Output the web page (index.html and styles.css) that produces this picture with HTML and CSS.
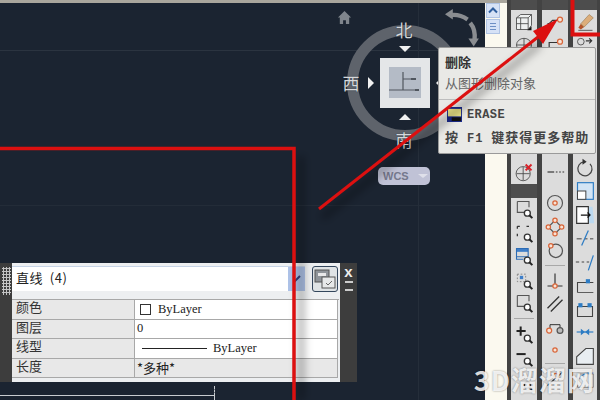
FILE: index.html
```html
<!DOCTYPE html>
<html lang="en">
<head>
    <meta charset="UTF-8">
    <title>ERASE</title>
    <link rel="stylesheet" href="styles.css">
</head>
<body>

    <!-- Shared toolbar icons -->
    <svg class="defs" width="0" height="0">
        <symbol id="zoom-lens" viewBox="0 0 24 24">
            <circle cx="16" cy="17" r="3.6" fill="#fff" stroke="#333" stroke-width="1.6"/>
            <path d="M18.5 19.5l3.5 3.5" stroke="#222" stroke-width="2.4"/>
        </symbol>
        <symbol id="zoom-box" viewBox="0 0 24 24">
            <path d="M4 3h14v7M4 3v13h8" fill="none" stroke="#555" stroke-width="1.3"/>
            <use href="#zoom-lens"/>
        </symbol>
    </svg>

    <div class="screen">
        <!-- Drawing area -->
        <div class="drawing">
            <div class="grid-h"></div>
            <div class="grid-h grid-h2"></div>
            <div class="grid-v"></div>

            <!-- ViewCube -->
            <div class="compass">
                <svg class="home" viewBox="0 0 16 16"><path d="M8 1L1 8h2v7h3.5v-4h3v4H13V8h2z" fill="#7f858c"/></svg>
                <svg class="rotate" viewBox="0 0 40 46">
                    <path d="M8 7c8-1 13 1 19 5" fill="none" stroke="#8a8d91" stroke-width="5"/>
                    <path d="M1 6l9-6v12z" fill="#8a8d91"/>
                    <path d="M30 16c5 6 6 12 5 20" fill="none" stroke="#8a8d91" stroke-width="5"/>
                    <path d="M28 34l12 0-6 9z" fill="#8a8d91"/>
                </svg>
                <div class="ring"></div>
                <span class="dir dir-n">北</span>
                <span class="dir dir-w">西</span>
                <span class="dir dir-s">南</span>
                <i class="tri tri-n"></i>
                <i class="tri tri-s"></i>
                <i class="tri tri-w"></i>
                <i class="tri tri-e"></i>
                <div class="cube">
                    <div class="cube-face">
                        <svg viewBox="0 0 31 31"><path d="M0 23h30M14 5v18M14 12h9" fill="none" stroke="#50565e" stroke-width="1.2"/><path d="M22 11h5v2h-5zM26 22h4v2h-4z" fill="#50565e"/></svg>
                    </div>
                </div>
                <div class="wcs">WCS <i></i></div>
            </div>

            <!-- Quick properties palette -->
            <div class="palette">
                <div class="palette-grip"></div>
                <div class="palette-body">
                    <div class="palette-top">
                        <div class="select">
                            <span class="select-text">直线 (4)</span>
                            <div class="select-btn"><svg viewBox="0 0 10 10"><path d="M2 8l6-6" stroke="#34407a" stroke-width="2"/></svg></div>
                        </div>
                        <div class="toggle">
                            <svg viewBox="0 0 24 24">
                                <rect x="2" y="3" width="14" height="12" fill="#8f9499" stroke="#555"/>
                                <rect x="5" y="6" width="8" height="3" fill="#e8e8e8"/>
                                <rect x="9" y="10" width="13" height="11" fill="#e6e8e8" stroke="#555"/>
                                <path d="M13 16l2 2 4-4" fill="none" stroke="#666"/>
                            </svg>
                        </div>
                    </div>
                    <div class="prop-table">
                        <div class="prop-label">颜色</div>
                        <div class="prop-value"><i class="swatch"></i>ByLayer</div>
                        <div class="prop-label">图层</div>
                        <div class="prop-value">0</div>
                        <div class="prop-label">线型</div>
                        <div class="prop-value"><i class="line-sample"></i>ByLayer</div>
                        <div class="prop-label">长度</div>
                        <div class="prop-value prop-off">*多种*</div>
                    </div>
                </div>
                <div class="palette-side">
                    <span class="close">x</span>
                    <span class="menu"></span>
                </div>
            </div>

            <div class="bottom-line"></div>
        </div>

        <!-- Side scrollbar -->
        <div class="scrollbar">
            <div class="scroll-btn"><svg viewBox="0 0 12 12"><path d="M2 8l4-4 4 4" fill="none" stroke="#2f5f9f" stroke-width="2"/></svg></div>
            <div class="scroll-btn"><svg viewBox="0 0 12 12"><path d="M3 3h6M3 6h6M3 9h6" stroke="#6d8fc4"/></svg></div>
        </div>

        <!-- Toolbars -->
        <div class="toolbars">
            <div class="toolbar tb-view">
                <div class="tb-head"></div>
                <div class="tool"><svg viewBox="0 0 24 24"><path d="M3 7l5-4h13v13l-4 5H3zM3 7h14v14M17 7l4-4M8 7v14M3 14h14" fill="#eef0f0" stroke="#444"/><path d="M16 22l5-5v5z" fill="#111"/></svg></div>
                <div class="tool"><svg viewBox="0 0 24 24"><ellipse cx="12" cy="12" rx="9" ry="8" fill="none" stroke="#444"/><path d="M3 12h18M12 4v16" stroke="#444"/></svg></div>
                <div class="tb-space-a"></div>
                <div class="tool"><svg viewBox="0 0 24 24"><circle cx="11" cy="14" r="8.5" fill="none" stroke="#444"/><path d="M3 14h16M11 6v16" stroke="#444"/><path d="M14 3l7 7M21 3l-7 7" stroke="#d8232a" stroke-width="2.4"/></svg></div>
                <div class="tb-split"></div>
                <div class="tool"><svg viewBox="0 0 24 24"><use href="#zoom-box"/></svg></div>
                <div class="tool"><svg viewBox="0 0 24 24"><path d="M4 4h3M4 4v3M15 4h3M4 13v3" stroke="#333" stroke-width="1.5" fill="none"/><use href="#zoom-lens"/></svg></div>
                <div class="tool"><svg viewBox="0 0 24 24"><path d="M3 3h14v4H3z" fill="#3f7fc9"/><path d="M3 3h14v10H3zM3 3v13h8" fill="none" stroke="#2d6cb5" stroke-width="1.3"/><use href="#zoom-lens"/></svg></div>
                <div class="tool"><svg viewBox="0 0 24 24"><path d="M4 5h10v9H4z" fill="none" stroke="#777" stroke-dasharray="2 2"/><rect x="7" y="7" width="4" height="4" fill="#3f7fc9"/><use href="#zoom-lens"/></svg></div>
                <div class="tool"><svg viewBox="0 0 24 24"><use href="#zoom-box"/></svg></div>
                <div class="tb-rule"></div>
                <div class="tool"><svg viewBox="0 0 24 24"><path d="M8 3v11M3 8.500h11" stroke="#222" stroke-width="2.4"/><use href="#zoom-lens"/></svg></div>
                <div class="tool"><svg viewBox="0 0 24 24"><path d="M3 8.500h11" stroke="#222" stroke-width="2.4"/><use href="#zoom-lens"/></svg></div>
                <div class="tool"><svg viewBox="0 0 24 24"><use href="#zoom-lens"/></svg></div>
            </div>

            <div class="toolbar tb-snap">
                <div class="tb-head"></div>
                <div class="tool"><svg viewBox="0 0 24 24"><path d="M3 14h2l4-4h8" fill="none" stroke="#333" stroke-width="1.4"/><circle cx="18" cy="9" r="3" fill="#f6e3d6" stroke="#d9663a" stroke-width="1.5"/></svg></div>
                <div class="tool"><svg viewBox="0 0 24 24"><path d="M5 18V9h10" fill="none" stroke="#333" stroke-width="1.4"/><circle cx="18" cy="8" r="3" fill="#f6e3d6" stroke="#d9663a" stroke-width="1.5"/></svg></div>
                <div class="tb-space-b"></div>
                <div class="tool"><svg viewBox="0 0 24 24"><path d="M3 12h8" stroke="#333" stroke-width="1.4"/><path d="M13 12h2M17 12h2M21 12h2" stroke="#333" stroke-width="1.2"/></svg></div>
                <div class="tool tool-drop"><svg viewBox="0 0 24 24"><circle cx="12" cy="12" r="9" fill="none" stroke="#555" stroke-width="1.4"/><circle cx="12" cy="12" r="2.6" fill="#f6e3d6" stroke="#d9663a" stroke-width="1.5"/></svg></div>
                <div class="tool"><svg viewBox="0 0 24 24"><path d="M12 4l8 8-8 8-8-8z" fill="none" stroke="#555" stroke-width="1.4"/><circle cx="12" cy="4" r="2.6" fill="#f6e3d6" stroke="#d9663a" stroke-width="1.5"/><circle cx="20" cy="12" r="2.6" fill="#f6e3d6" stroke="#d9663a" stroke-width="1.5"/><circle cx="12" cy="20" r="2.6" fill="#f6e3d6" stroke="#d9663a" stroke-width="1.5"/><circle cx="4" cy="12" r="2.6" fill="#f6e3d6" stroke="#d9663a" stroke-width="1.5"/></svg></div>
                <div class="tool"><svg viewBox="0 0 24 24"><circle cx="13" cy="13" r="8" fill="none" stroke="#555" stroke-width="1.5"/><circle cx="7" cy="7" r="2.6" fill="#f6e3d6" stroke="#d9663a" stroke-width="1.5"/></svg></div>
                <div class="tb-rule"></div>
                <div class="tool"><svg viewBox="0 0 24 24"><path d="M12 3v15M3 18h18" stroke="#333" stroke-width="1.4"/><circle cx="12" cy="18" r="2.6" fill="#f6e3d6" stroke="#d9663a" stroke-width="1.5"/></svg></div>
                <div class="tool"><svg viewBox="0 0 24 24"><path d="M3 17L17 3M7 21L21 7" stroke="#333" stroke-width="1.6"/></svg></div>
                <div class="tool"><svg viewBox="0 0 24 24"><path d="M6 13V8h12v5" fill="none" stroke="#333" stroke-width="1.2"/><circle cx="5" cy="15" r="3" fill="#f6e3d6" stroke="#d9663a" stroke-width="1.5"/><circle cx="18" cy="15" r="3.500" fill="#bbb" stroke="#555" stroke-width="1.5"/></svg></div>
                <div class="tool tool-short"><svg viewBox="0 0 24 24"><circle cx="12" cy="12" r="2.6" fill="#f6e3d6" stroke="#d9663a" stroke-width="1.5"/></svg></div>
                <div class="tb-rule"></div>
                <div class="tool"><svg viewBox="0 0 24 24"><path d="M3 21L21 5" stroke="#333" stroke-width="1.4"/><circle cx="13" cy="9" r="2.600" fill="none" stroke="#d9663a" stroke-width="1.5"/></svg></div>
            </div>

            <div class="toolbar tb-modify">
                <div class="tb-head"></div>
                <div class="tool"><svg viewBox="0 0 24 24"><path d="M4 22h17" stroke="#444"/><path d="M4 19l3-5 4 4-4 3z" fill="#b5552a"/><path d="M7 14L17 3l5 4-11 11z" fill="#dcae7b" stroke="#8a6a3f" stroke-width=".6"/></svg></div>
                <div class="tool"><svg viewBox="0 0 24 24"><circle cx="7" cy="8" r="4" fill="none" stroke="#444"/><path d="M13 7h7M17 4l3 3-3 3" fill="none" stroke="#333" stroke-width="1.4"/></svg></div>
                <div class="tb-space-c"></div>
                <div class="tool"><svg viewBox="0 0 24 24"><path d="M18 7a8.500 8.500 0 1 1-7-2.500" fill="none" stroke="#444" stroke-width="1.5"/><path d="M9 1l5 3.500-5 3.500z" fill="#333"/></svg></div>
                <div class="tool"><svg viewBox="0 0 24 24"><rect x="3" y="2" width="19" height="20" fill="#d2e4f5" stroke="#2d7cc4" stroke-width="1.4"/><rect x="3" y="12" width="10" height="10" fill="#fff" stroke="#444" stroke-width="1.2"/></svg></div>
                <div class="tool"><svg viewBox="0 0 24 24"><path d="M16 2h5l2 20h-7z" fill="#bcd9f0"/><path d="M2 2h14v20H2z" fill="#fff" stroke="#333" stroke-width="1.4"/><path d="M7 12h11M15 9l3 3-3 3" fill="none" stroke="#111" stroke-width="1.5"/></svg></div>
                <div class="tool"><svg viewBox="0 0 24 24"><path d="M2 13h6M12 13h3M18 13h4" stroke="#444" stroke-width="1.2"/><path d="M8 21l8-18" stroke="#2d7cc4" stroke-width="1.5"/></svg></div>
                <div class="tool"><svg viewBox="0 0 24 24"><path d="M1 12h4M8 12h3M14 12h3" stroke="#444" stroke-width="1.2"/><path d="M16 22l6-18" stroke="#2d7cc4" stroke-width="1.5"/></svg></div>
                <div class="tool"><svg viewBox="0 0 24 24"><path d="M3 21V9h19" fill="none" stroke="#444" stroke-width="1.300"/><path d="M3 21h19" stroke="#444"/><rect x="13" y="5" width="5" height="5" fill="#2d7cc4"/></svg></div>
                <div class="tool"><svg viewBox="0 0 24 24"><path d="M3 21V9h18v12z" fill="none" stroke="#444" stroke-width="1.300"/><rect x="4" y="5" width="5" height="5" fill="#2d7cc4"/><rect x="15" y="5" width="5" height="5" fill="#2d7cc4"/></svg></div>
                <div class="tool"><svg viewBox="0 0 24 24"><path d="M2 12h20" stroke="#2d7cc4" stroke-width="1.4"/><path d="M7 8l5 4-5 4zM17 8l-5 4 5 4z" fill="#2d7cc4"/></svg></div>
                <div class="tool"><svg viewBox="0 0 24 24"><path d="M2 22V13L13 3h9v19z" fill="#e9eef2" stroke="#444" stroke-width="1.300"/></svg></div>
                <div class="tool"><svg viewBox="0 0 24 24"><path d="M3 22V6h19v16z" fill="#e9eef2" stroke="#777"/><path d="M3 14C6 7 14 4 22 5" fill="none" stroke="#2d7cc4" stroke-width="1.400"/></svg></div>
            </div>
        </div>
    </div>

    <!-- Tooltip over the canvas and toolbars -->
    <div class="tooltip">
        <div class="tip-main">
            <h4>删除</h4>
            <p>从图形删除对象</p>
        </div>
        <div class="tip-help">
            <div class="tip-cmd">
                <svg viewBox="0 0 16 16">
                    <rect x="0" y="0" width="16" height="16" fill="#1b2b8f"/>
                    <rect x="1" y="2" width="14" height="8" fill="#efe889"/>
                    <rect x="5" y="11" width="10" height="4" fill="#111"/>
                </svg>
                <b>ERASE</b>
            </div>
            <div class="tip-f1">按 <span class="key">F1</span> 键获得更多帮助</div>
        </div>
    </div>

    <!-- Red markup from the screenshot author -->
    <svg class="markup" viewBox="0 0 600 400">
        <defs>
            <filter id="soft" x="-20%" y="-20%" width="140%" height="140%"><feGaussianBlur stdDeviation="4"/></filter>
        </defs>
        <path d="M301 400V156M322 218L540 44" fill="none" stroke="#000" stroke-opacity=".35" stroke-width="6" filter="url(#soft)"/>
        <path d="M0 148.500H294V400" fill="none" stroke="#dc1010" stroke-width="3.500"/>
        <path d="M319 209L538 37" stroke="#dc1010" stroke-width="3"/>
        <path d="M558 19L533 31 543 44z" fill="#dc1010"/>
        <path d="M572.500 0V34.500H600" fill="none" stroke="#dc1010" stroke-width="4"/>
    </svg>

    <div class="watermark">3D溜溜网</div>

</body>
</html>
```

FILE: styles.css
```css
body {
    margin: 0;
    width: 600px;
    height: 400px;
    overflow: hidden;
    position: relative;
    font-family: "Noto Sans CJK SC", "Liberation Sans", sans-serif;
    background: #1b2431;
}

.defs {
    position: absolute;
}

.screen {
    display: flex;
    height: 400px;
    box-sizing: border-box;
    border-top: 3px solid #a9a69d;
}

/* Drawing area */
.drawing {
    flex: 0 0 485px;
    position: relative;
    background: #1b2431;
}

.grid-h {
    position: absolute;
    left: 0;
    right: 0;
    top: 47px;
    border-top: 1px solid #2b3440;
}

.grid-h2 {
    top: 202px;
    border-top-color: #232c38;
}

.grid-v {
    position: absolute;
    top: 0;
    bottom: 0;
    left: 418px;
    border-left: 1px solid #252e3a;
}

/* ViewCube */
.compass {
    position: absolute;
    left: 335px;
    top: 0;
    width: 150px;
    height: 190px;
    color: #d6d8da;
}

.home {
    position: absolute;
    left: 2px;
    top: 7px;
    width: 15px;
    height: 15px;
}

.rotate {
    position: absolute;
    left: 108px;
    top: 6px;
    width: 37px;
    height: 40px;
}

.ring {
    position: absolute;
    left: 12px;
    top: 22px;
    width: 116px;
    height: 116px;
    box-sizing: border-box;
    border: 11px solid #5e636b;
    border-radius: 50%;
}

.dir {
    position: absolute;
    font-size: 17px;
    line-height: 20px;
    width: 20px;
    text-align: center;
    text-shadow: 0 0 1px #1b2431;
}

.dir-n { left: 59px; top: 17px; }
.dir-w { left: 6px; top: 70px; }
.dir-s { left: 59px; top: 127px; }

.tri {
    position: absolute;
    width: 0;
    height: 0;
    border-style: solid;
    border-color: transparent;
}

.tri-n {
    left: 64px;
    top: 43px;
    border-width: 6px 6px 0;
    border-top-color: #f0f0f0;
}

.tri-s {
    left: 64px;
    top: 111px;
    border-width: 0 6px 6px;
    border-bottom-color: #f0f0f0;
}

.tri-w {
    left: 33px;
    top: 74px;
    border-width: 6px 0 6px 6px;
    border-left-color: #f0f0f0;
}

.tri-e {
    left: 101px;
    top: 74px;
    border-width: 6px 6px 6px 0;
    border-right-color: #f0f0f0;
}

.cube {
    position: absolute;
    left: 45px;
    top: 55px;
    width: 50px;
    height: 50px;
    box-sizing: border-box;
    padding: 9px;
    background: #e4e6e8;
}

.cube-face {
    height: 31px;
    background: #b4bbc6;
}

.cube-face svg {
    display: block;
    width: 31px;
    height: 31px;
}

.wcs {
    position: absolute;
    left: 43px;
    top: 164px;
    width: 52px;
    height: 18px;
    box-sizing: border-box;
    padding-left: 5px;
    border-radius: 5px;
    background: #c0c2d6;
    color: #75788c;
    font: bold 11px/18px "Liberation Sans", sans-serif;
}

.wcs i {
    display: inline-block;
    margin-left: 6px;
    border-style: solid;
    border-width: 4px 5px 0;
    border-color: #dfe0ea transparent transparent;
    vertical-align: 2px;
}

/* Quick properties palette */
.palette {
    position: absolute;
    left: 0;
    top: 260px;
    width: 357px;
    height: 119px;
    display: flex;
    background: #3d3d3d;
}

.palette-grip {
    flex: 0 0 9px;
    height: 28px;
    margin: 4px 1px 0 2px;
    background-image: radial-gradient(circle, #c4c4c4 1px, transparent 1.3px);
    background-size: 3px 3px;
}

.palette-body {
    flex: 0 0 328px;
    box-sizing: border-box;
    background: #edeff1;
    padding-top: 3px;
}

.palette-top {
    display: flex;
    align-items: flex-start;
    gap: 7px;
    height: 33px;
}

.select {
    flex: 0 0 293px;
    height: 25px;
    display: flex;
    align-items: center;
    justify-content: space-between;
    background: #fff;
    border-top: 1px solid #c6d4e6;
    color: #222;
    padding-left: 4px;
    box-sizing: border-box;
}

.select-text {
    font-size: 13px;
    line-height: 19px;
    margin-bottom: 4px;
    word-spacing: 3px;
    letter-spacing: 0.6px;
}

.select-btn {
    width: 17px;
    height: 24px;
    background: #aec3e8;
    display: flex;
    align-items: center;
    justify-content: center;
}

.select-btn svg {
    width: 10px;
    height: 10px;
}

.toggle {
    width: 24px;
    height: 24px;
    border: 1px solid #33465c;
    border-radius: 3px;
    background: #dfe3e5;
}

.toggle svg {
    display: block;
    width: 24px;
    height: 24px;
}

.prop-table {
    display: grid;
    grid-template-columns: 123px 203px;
    grid-auto-rows: 19.500px;
    border-top: 1px solid #a8a8a8;
    margin-right: 1px;
}

.prop-label {
    background: #e8e8e8;
    border-bottom: 1px solid #a8a8a8;
    border-right: 1px solid #a8a8a8;
    box-sizing: border-box;
    font-size: 13px;
    line-height: 14px;
    padding-left: 4px;
    color: #333;
}

.prop-value {
    display: flex;
    align-items: center;
    background: #fff;
    border-bottom: 1px solid #a8a8a8;
    border-right: 1px solid #a8a8a8;
    box-sizing: border-box;
    font: 12.500px "Liberation Serif", "Noto Sans CJK SC", serif;
    color: #222;
    padding-left: 2px;
}

.prop-off {
    background: #e8e8e8;
    font-size: 13px;
    font-family: "Noto Sans CJK SC", sans-serif;
}

.swatch {
    width: 9px;
    height: 9px;
    border: 1px solid #333;
    margin: 0 7px 0 3px;
}

.line-sample {
    width: 65px;
    border-top: 1px solid #222;
    margin: 0 6px 0 5px;
}

.palette-side {
    flex: 1;
    display: flex;
    flex-direction: column;
    align-items: center;
    padding-top: 2px;
    color: #eee;
}

.close {
    font: bold 15px/14px "Liberation Sans", sans-serif;
}

.menu {
    width: 8px;
    height: 6px;
    margin-top: 2px;
    border-top: 2px solid #ccc;
    border-bottom: 2px solid #ccc;
}

.bottom-line {
    position: absolute;
    left: 0;
    top: 392px;
    width: 215px;
    height: 5px;
    box-sizing: border-box;
    border-top: 1px solid #c8ccd0;
    border-right: 1px dashed #c8ccd0;
}

.bottom-line::before {
    content: "";
    position: absolute;
    right: -1px;
    top: -10px;
    height: 10px;
    border-right: 1px dashed #c8ccd0;
}

/* Side scrollbar */
.scrollbar {
    flex: 0 0 22px;
    background: #fbf9ef;
    box-sizing: border-box;
    padding: 0 7px 0 1px;
}

.scroll-btn {
    height: 15px;
    background: #d6e2f6;
    border: 1px solid #b0c4e4;
    box-sizing: border-box;
    margin-bottom: 1px;
}

.scroll-btn svg {
    display: block;
    width: 12px;
    height: 13px;
}

/* Toolbars */
.toolbars {
    flex: 1;
    display: flex;
    gap: 5px;
    padding: 0 3px 0 4px;
    background: #434343;
    margin-top: -3px;
    height: 400px;
}

.toolbar {
    background: #dcdcdc;
    display: flex;
    flex-direction: column;
    align-items: center;
    overflow: hidden;
}

.tb-view { flex: 0 0 26px; }
.tb-snap { flex: 0 0 26px; }
.tb-modify { flex: 0 0 24px; }

.tb-head {
    align-self: stretch;
    flex: 0 0 10px;
    background: #4d4d4d;
}

.tool {
    flex: 0 0 23.500px;
    display: flex;
    align-items: center;
    justify-content: center;
}

.tool svg {
    width: 20px;
    height: 20px;
}

.tool-short {
    flex-basis: 20px;
}

.tool-drop {
    margin-top: 8px;
}

.tb-space-a { flex: 0 0 103px; }
.tb-space-b { flex: 0 0 103px; }
.tb-space-c { flex: 0 0 99px; }

.tb-split {
    align-self: stretch;
    flex: 0 0 14px;
    background: #4d4d4d;
}

.tb-rule {
    align-self: stretch;
    flex: 0 0 1px;
    margin: 3px 3px;
    background: #a8a8a8;
}

/* Tooltip */
.tooltip {
    position: absolute;
    left: 438px;
    top: 47px;
    width: 158px;
    height: 107px;
    box-sizing: border-box;
    background: #e9e9e6;
    border: 1px solid #9a9a9a;
    border-radius: 2px;
    color: #444;
}

.tip-main {
    height: 52px;
    box-sizing: border-box;
    padding: 5px 6px 0;
    border-bottom: 1px solid #bdbdbd;
}

.tip-main h4 {
    margin: 0;
    font-size: 13px;
    line-height: 18px;
    color: #333;
}

.tip-main p {
    margin: 3px 0 0;
    font-size: 13px;
    line-height: 18px;
    color: #666;
}

.tip-help {
    padding: 6px 0 0 6px;
}

.tip-cmd {
    display: flex;
    align-items: center;
    gap: 5px;
    padding-left: 2px;
    font: bold 12px "Liberation Mono", monospace;
    letter-spacing: 0.4px;
}

.tip-cmd svg {
    width: 15px;
    height: 17px;
}

.tip-f1 {
    margin-top: 5px;
    font-size: 13px;
    font-weight: bold;
    line-height: 18px;
    letter-spacing: 1px;
    white-space: nowrap;
}

.key {
    font: bold 12px "Liberation Mono", monospace;
    margin: 0 4px;
}

/* Markup and watermark */
.markup {
    position: absolute;
    left: 0;
    top: 0;
    width: 600px;
    height: 400px;
}

.watermark {
    position: absolute;
    right: 5px;
    bottom: 2px;
    font-size: 27px;
    font-weight: bold;
    line-height: 36px;
    letter-spacing: 1px;
    color: rgba(255, 255, 255, 0.85);
    text-shadow: 0 0 2px rgba(0, 0, 0, 0.45);
    white-space: nowrap;
}
```
